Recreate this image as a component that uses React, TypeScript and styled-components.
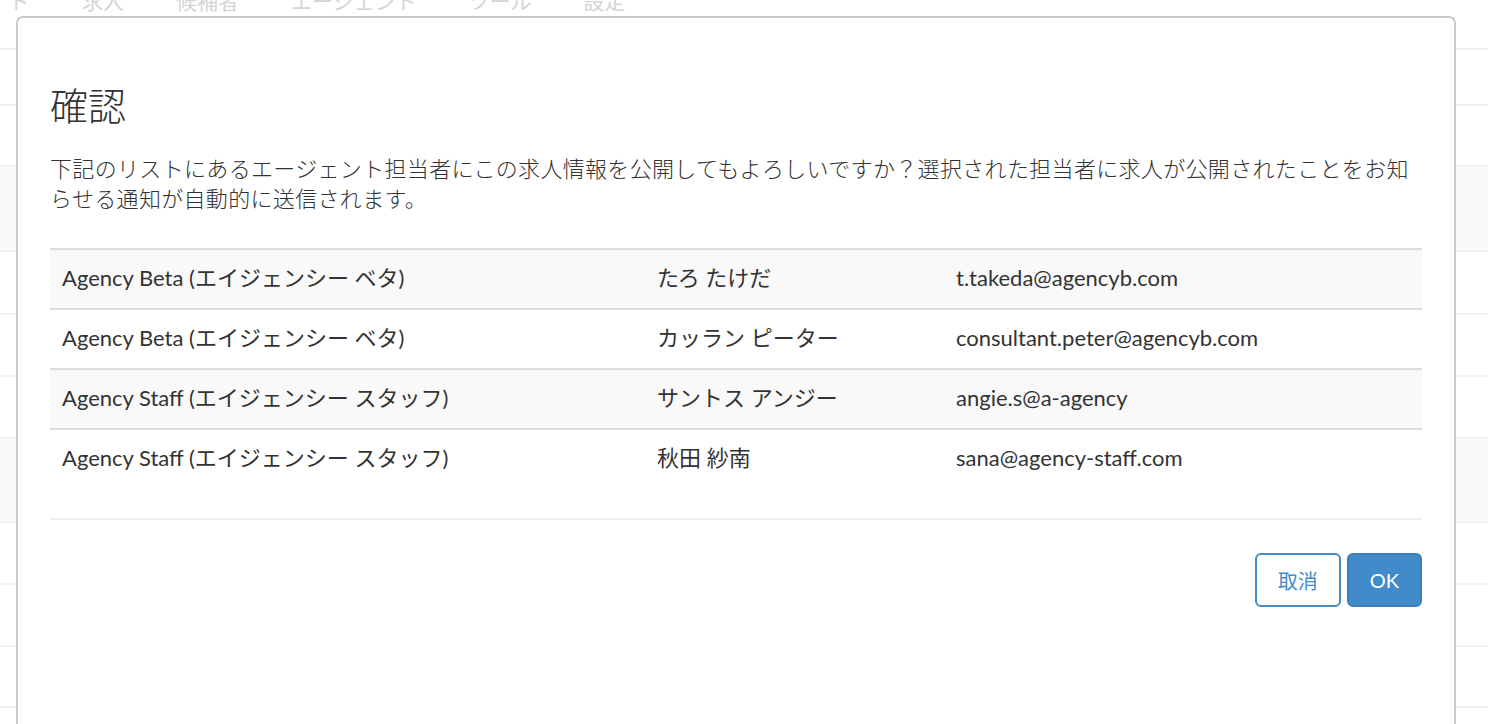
import React from 'react';
import styled, { createGlobalStyle } from 'styled-components';

const GlobalStyle = createGlobalStyle`
    html, body {
        margin: 0;
        padding: 0;
        background: #ffffff;
        overflow: hidden;
    }
    body {
        font-family: "Lato", "Noto Sans CJK JP", sans-serif;
        color: #333333;
    }
`;

interface Agent {
    agency: string;
    name: string;
    email: string;
}

const agents: Agent[] = [
    { agency: 'Agency Beta (エイジェンシー ベタ)', name: 'たろ たけだ', email: 't.takeda@agencyb.com' },
    { agency: 'Agency Beta (エイジェンシー ベタ)', name: 'カッラン ピーター', email: 'consultant.peter@agencyb.com' },
    { agency: 'Agency Staff (エイジェンシー スタッフ)', name: 'サントス アンジー', email: 'angie.s@a-agency' },
    { agency: 'Agency Staff (エイジェンシー スタッフ)', name: '秋田 紗南', email: 'sana@agency-staff.com' },
];

const navItems = ['ド', '求人', '候補者', 'エージェント', 'ツール', '設定'];

// rows of the page that sits behind the dialog
const pageRows = [
    { height: 56, shaded: false },
    { height: 61, shaded: false },
    { height: 85, shaded: true },
    { height: 63, shaded: false },
    { height: 62, shaded: false },
    { height: 62, shaded: false },
    { height: 84, shaded: true },
    { height: 62, shaded: false },
    { height: 62, shaded: false },
    { height: 61, shaded: false },
    { height: 61, shaded: false },
];

const Page = styled.div`
    width: 100%;
    height: 724px;
    overflow: hidden;
    position: relative;
`;

const Nav = styled.ul`
    display: flex;
    align-items: flex-start;
    margin: 0;
    padding: 0 0 0 9px;
    height: 48px;
    list-style: none;
    box-sizing: border-box;
`;

const NavItem = styled.li`
    font-family: "Noto Sans CJK JP", sans-serif;
    font-size: 21px;
    line-height: 24px;
    color: #d4d4d4;
    margin: -12px 52px 0 0;
`;

const PageRow = styled.div<{ $height: number; $shaded: boolean }>`
    height: ${(p) => p.$height}px;
    border-top: 2px solid #f1f1f1;
    background: ${(p) => (p.$shaded ? '#fafafa' : '#ffffff')};
    box-sizing: border-box;
`;

const Dialog = styled.div`
    position: absolute;
    top: 16px;
    left: 16px;
    width: 1440px;
    height: 760px;
    box-sizing: border-box;
    border: 2px solid #cacaca;
    border-radius: 7px;
    background: #ffffff;
    padding: 63px 32px 0 32px;
`;

const Title = styled.h3`
    margin: 0;
    font-family: "Noto Sans CJK JP", sans-serif;
    font-weight: 300;
    font-size: 38px;
    line-height: 46px;
    color: #333333;
`;

const Message = styled.p`
    margin: 25px 0 0 0;
    font-family: "Noto Sans CJK JP", sans-serif;
    font-weight: 300;
    font-size: 22px;
    letter-spacing: 0.33px;
    line-height: 30px;
    color: #333333;
`;

const Table = styled.div`
    margin: 36px 0 30px 0;
`;

const Row = styled.div<{ $striped: boolean }>`
    display: grid;
    grid-template-columns: 595px 299px 1fr;
    height: 60px;
    box-sizing: border-box;
    border-top: 2px solid #dddddd;
    background: ${(p) => (p.$striped ? '#f9f9f9' : '#ffffff')};
    align-items: center;
`;

const Cell = styled.div`
    padding: 0 12px;
    font-size: 22px;
    line-height: 28px;
    margin-top: -2px;
    color: #333333;
    white-space: nowrap;
`;

const Footer = styled.div`
    display: flex;
    justify-content: flex-end;
    gap: 6px;
    border-top: 2px solid #eeeeee;
    padding-top: 33px;
`;

const Button = styled.button<{ $primary?: boolean }>`
    height: 54px;
    padding: 0 21px;
    font-family: "Lato", "Noto Sans CJK JP", sans-serif;
    font-size: 20px;
    border-radius: 6px;
    border: 2px solid ${(p) => (p.$primary ? '#3c7fb8' : '#428bca')};
    background: ${(p) => (p.$primary ? '#428bca' : '#ffffff')};
    color: ${(p) => (p.$primary ? '#ffffff' : '#428bca')};
    cursor: pointer;
`;

export default function App() {
    return (
        <Page>
            <GlobalStyle />
            <Nav>
                {navItems.map((item) => (
                    <NavItem key={item}>{item}</NavItem>
                ))}
            </Nav>
            {pageRows.map((r, i) => (
                <PageRow key={i} $height={r.height} $shaded={r.shaded} />
            ))}
            <Dialog>
                <Title>確認</Title>
                <Message>
                    下記のリストにあるエージェント担当者にこの求人情報を公開してもよろしいですか？選択された担当者に求人が公開されたことをお知らせる通知が自動的に送信されます。
                </Message>
                <Table>
                    {agents.map((a, i) => (
                        <Row key={i} $striped={i % 2 === 0}>
                            <Cell>{a.agency}</Cell>
                            <Cell>{a.name}</Cell>
                            <Cell>{a.email}</Cell>
                        </Row>
                    ))}
                </Table>
                <Footer>
                    <Button>取消</Button>
                    <Button $primary>OK</Button>
                </Footer>
            </Dialog>
        </Page>
    );
}
